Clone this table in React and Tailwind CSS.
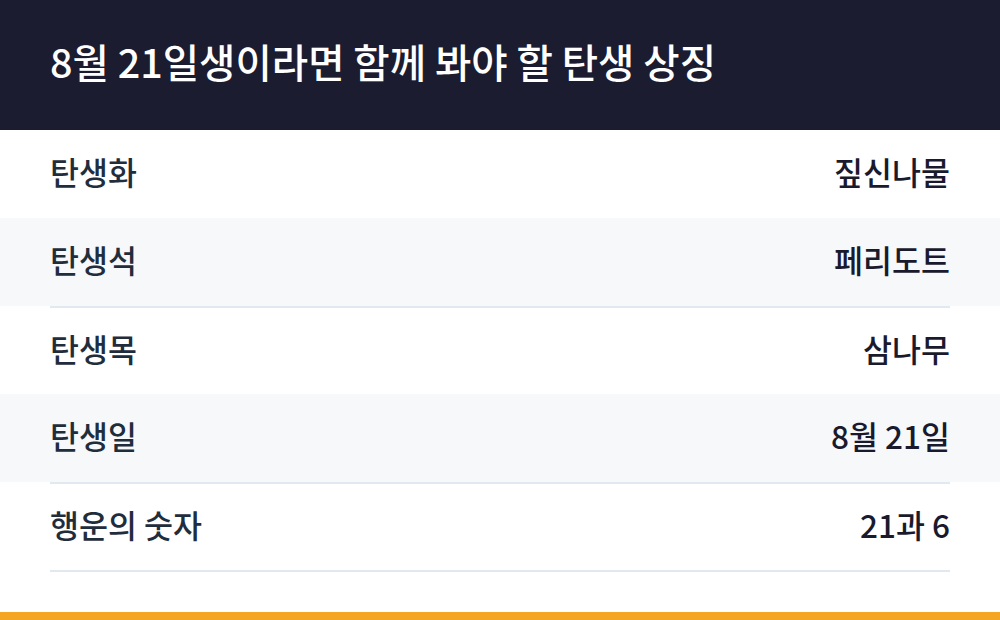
import React from 'react';

const rows = [
    { label: '탄생화', value: '짚신나물' },
    { label: '탄생석', value: '페리도트' },
    { label: '탄생목', value: '삼나무' },
    { label: '탄생일', value: '8월 21일' },
    { label: '행운의 숫자', value: '21과 6' },
];

const App = () => {
    return (
        <div
            className="w-[1000px] h-[620px] bg-white flex flex-col overflow-hidden"
            style={{ fontFamily: '"Noto Sans CJK KR", "Noto Sans", sans-serif' }}
        >
            {/* Header */}
            <header className="h-[130px] bg-[#1b1c30] flex items-center px-[50px] pb-[8px] shrink-0">
                <h1 className="text-[39.5px] leading-none font-medium text-white">
                    8월 21일생이라면 함께 봐야 할 탄생 상징
                </h1>
            </header>

            {/* Rows */}
            <div className="flex-1 flex flex-col">
                {rows.map((row, i) => (
                    <div key={row.label} className={i % 2 === 1 ? 'bg-[#f7f8fa]' : 'bg-white'}>
                        <div
                            className={`mx-[50px] h-[88px] pb-[4px] flex items-center justify-between ${
                                i === 2 || i === 4 ? 'border-t-2 border-[#e2e8f0]' : ''
                            } ${i === 4 ? 'border-b-2 h-[90px]' : ''}`}
                        >
                            <span className="text-[31.5px] font-medium text-[#1f2d3d]">{row.label}</span>
                            <span className="text-[31.5px] font-medium text-[#1a1a2e]">{row.value}</span>
                        </div>
                    </div>
                ))}
            </div>

            {/* Accent bar */}
            <div className="h-[8px] bg-[#f4a623] shrink-0" />
        </div>
    );
};

export default App;
